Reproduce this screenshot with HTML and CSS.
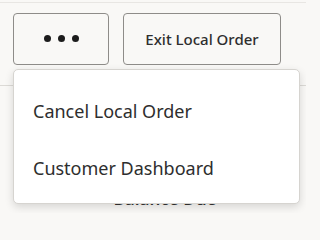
FILE: index.html
```html
<!DOCTYPE html>
<html>
<head>
<meta charset="utf-8">
<link rel="stylesheet" href="styles.css">
</head>
<body>
<div class="page">
  <div class="toolbar">
    <button class="btn btn-more" aria-label="More actions">
      <span class="dot"></span><span class="dot"></span><span class="dot"></span>
    </button>
    <button class="btn btn-exit">Exit Local Order</button>
  </div>
  <div class="content">
    <div class="balance">Balance Due</div>
  </div>
  <div class="menu">
    <div class="menu-item">Cancel Local Order</div>
    <div class="menu-item">Customer Dashboard</div>
  </div>
</div>
</body>
</html>
```
FILE: styles.css
```css
html, body {
  margin: 0;
  padding: 0;
}
body {
  background: #f9f8f6;
  font-family: "Noto Sans", "Open Sans", sans-serif;
  color: #2e2e2e;
  width: 306px;
  height: 213px;
  overflow: hidden;
}
.page {
  position: relative;
  height: 211px;
  margin-top: 2px;
  border-top: 1px solid #e8e6e3;
  overflow: hidden;
}
.toolbar {
  display: flex;
  gap: 14px;
  padding: 10px 13px 0 13px;
  height: 83px;
  box-sizing: border-box;
  border-bottom: 1px solid #dcdad6;
}
.btn {
  height: 52px;
  box-sizing: border-box;
  border: 1px solid #8e8c89;
  border-radius: 4px;
  background: #f9f8f6;
  padding: 0;
  display: flex;
  align-items: center;
  justify-content: center;
  font-family: inherit;
  color: #2e2e2e;
}
.btn-more {
  width: 96px;
  gap: 7px;
  padding-bottom: 2px;
}
.dot {
  width: 7px;
  height: 7px;
  border-radius: 50%;
  background: #1c1c1c;
}
.btn-exit {
  width: 158px;
  font-size: 15px;
  font-weight: 500;
  padding-bottom: 1px;
}
.content {
  background: #f9f8f6;
  height: 140px;
  display: flex;
  justify-content: center;
  padding-top: 101px;
  box-sizing: border-box;
}
.balance {
  font-size: 17px;
  font-weight: 600;
  color: #333;
  padding-left: 24px;
}
.menu {
  position: absolute;
  left: 13px;
  top: 66px;
  width: 287px;
  height: 135px;
  box-sizing: border-box;
  background: #ffffff;
  border: 1px solid #d6d4d0;
  border-radius: 5px;
  box-shadow: 0 3px 8px rgba(0, 0, 0, 0.14);
  padding-top: 12px;
}
.menu-item {
  height: 57px;
  display: flex;
  align-items: center;
  padding-left: 19px;
  font-size: 18px;
  color: #2e2e2e;
}
```
